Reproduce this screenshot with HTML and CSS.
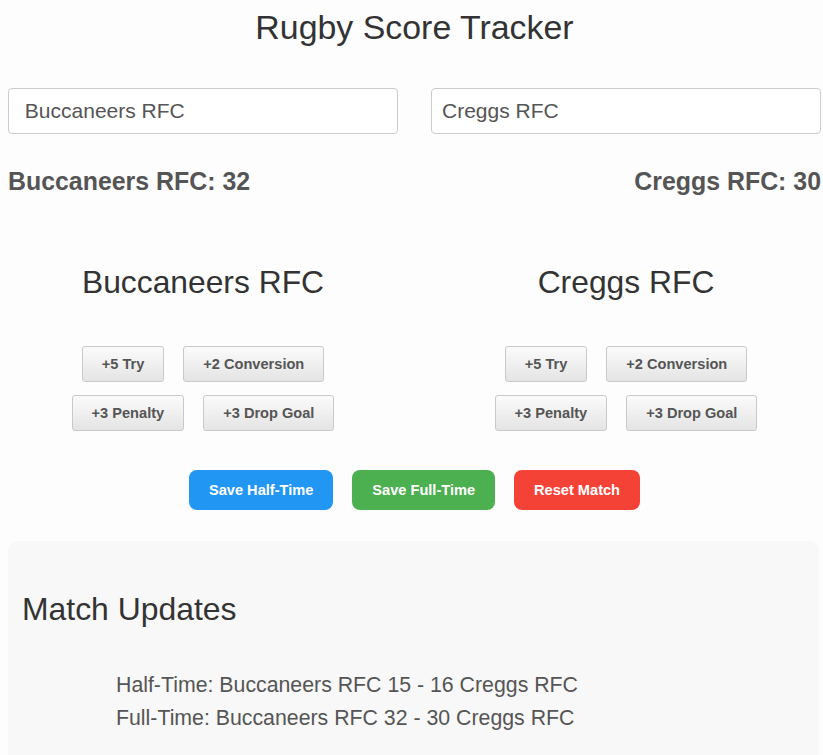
FILE: index.html
```html
<!DOCTYPE html>
<html lang="en">
<head>
<meta charset="utf-8">
<title>Rugby Score Tracker</title>
<link rel="stylesheet" href="styles.css">
</head>
<body>
<div class="page">
  <h1 class="title">Rugby Score Tracker</h1>

  <div class="name-row">
    <input class="team-input" type="text" value=" Buccaneers RFC">
    <input class="team-input" type="text" value="Creggs RFC">
  </div>

  <div class="score-row">
    <div class="score">Buccaneers RFC: 32</div>
    <div class="score">Creggs RFC: 30</div>
  </div>

  <div class="teams">
    <div class="team">
      <h2 class="team-name">Buccaneers RFC</h2>
      <div class="btn-row">
        <button class="pt-btn">+5 Try</button>
        <button class="pt-btn">+2 Conversion</button>
      </div>
      <div class="btn-row">
        <button class="pt-btn">+3 Penalty</button>
        <button class="pt-btn">+3 Drop Goal</button>
      </div>
    </div>
    <div class="team">
      <h2 class="team-name">Creggs RFC</h2>
      <div class="btn-row">
        <button class="pt-btn">+5 Try</button>
        <button class="pt-btn">+2 Conversion</button>
      </div>
      <div class="btn-row">
        <button class="pt-btn">+3 Penalty</button>
        <button class="pt-btn">+3 Drop Goal</button>
      </div>
    </div>
  </div>

  <div class="actions">
    <button class="act-btn act-blue">Save Half-Time</button>
    <button class="act-btn act-green">Save Full-Time</button>
    <button class="act-btn act-red">Reset Match</button>
  </div>

  <div class="updates">
    <h2 class="updates-title">Match Updates</h2>
    <ul class="updates-list">
      <li>Half-Time: Buccaneers RFC 15 - 16 Creggs RFC</li>
      <li>Full-Time: Buccaneers RFC 32 - 30 Creggs RFC</li>
    </ul>
  </div>
</div>
</body>
</html>
```

FILE: styles.css
```css
html, body {
  margin: 0;
  padding: 0;
  background: #fdfdfd;
}

body {
  font-family: "Liberation Sans", Arial, sans-serif;
  color: #333;
}

.page {
  padding: 8px 2px 0 8px;
  width: 813px;
}

.title {
  margin: 0;
  font-size: 33.9px;
  line-height: 38px;
  font-weight: normal;
  text-align: center;
  color: #333;
}

.name-row {
  margin-top: 42px;
  display: flex;
  justify-content: space-between;
}

.team-input {
  box-sizing: border-box;
  width: 390px;
  height: 46px;
  margin: 0;
  padding: 0 10px;
  border: 1px solid #ccc;
  border-radius: 4px;
  background: #fff;
  font-family: "Liberation Sans", Arial, sans-serif;
  font-size: 21px;
  color: #555;
  outline: none;
}

.score-row {
  margin-top: 33px;
  display: flex;
  justify-content: space-between;
}

.score {
  font-size: 24.9px;
  line-height: 29px;
  font-weight: bold;
  color: #555;
}

.teams {
  margin-top: 68px;
  display: flex;
  justify-content: space-between;
}

.team {
  width: 390px;
  display: flex;
  flex-direction: column;
  align-items: center;
}

.team-name {
  margin: 0 0 46px;
  font-size: 31.8px;
  line-height: 36px;
  font-weight: normal;
  color: #333;
}

.btn-row {
  display: flex;
  justify-content: center;
  gap: 19px;
}

.btn-row + .btn-row {
  margin-top: 13px;
}

.pt-btn {
  box-sizing: border-box;
  height: 36px;
  padding: 0 19px;
  border: 1px solid #c9c9c9;
  border-radius: 3px;
  background: linear-gradient(#fbfbfb, #e4e4e4);
  font-family: "Liberation Sans", Arial, sans-serif;
  font-size: 14.6px;
  font-weight: bold;
  color: #555;
  cursor: pointer;
}

.actions {
  margin-top: 39px;
  display: flex;
  justify-content: center;
  gap: 19px;
}

.act-btn {
  box-sizing: border-box;
  height: 40px;
  padding: 0 20px;
  border: none;
  border-radius: 8px;
  font-family: "Liberation Sans", Arial, sans-serif;
  font-size: 14.6px;
  font-weight: bold;
  color: #fff;
  cursor: pointer;
}

.act-blue { background: #2196f3; }
.act-green { background: #4caf50; }
.act-red { background: #f44336; }

.updates {
  margin: 31px 2px 0 0;
  padding: 50px 14px 30px;
  background: #f8f8f8;
  border-radius: 10px;
}

.updates-title {
  margin: 0;
  font-size: 31.9px;
  line-height: 36px;
  font-weight: normal;
  color: #333;
}

.updates-list {
  margin: 42px 0 0;
  padding: 0 0 0 94px;
  list-style: none;
}

.updates-list li {
  font-size: 21.3px;
  line-height: 33px;
  color: #555;
}
```
